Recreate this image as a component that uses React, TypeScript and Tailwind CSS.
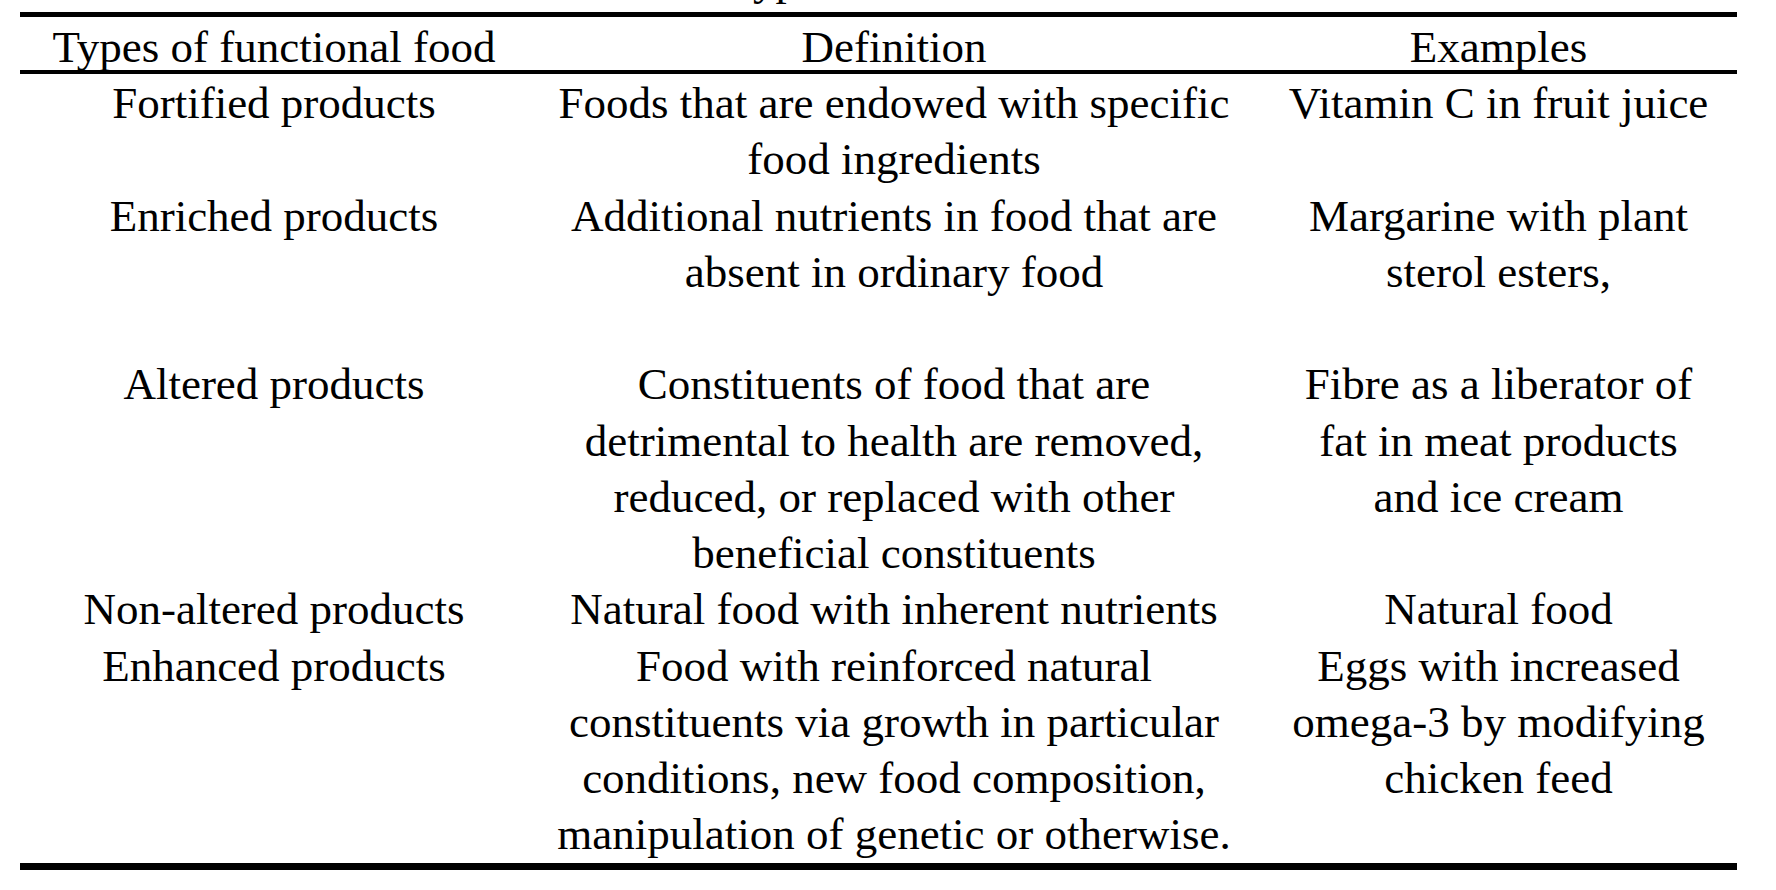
import React from 'react';

interface FoodRow {
  type: string;
  definition: string[];
  examples: string[];
  height?: string;
}

const rows: FoodRow[] = [
  {
    type: 'Fortified products',
    definition: ['Foods that are endowed with specific', 'food ingredients'],
    examples: ['Vitamin C in fruit juice'],
  },
  {
    type: 'Enriched products',
    definition: ['Additional nutrients in food that are', 'absent in ordinary food'],
    examples: ['Margarine with plant', 'sterol esters,'],
    height: 'h-[168.75px]',
  },
  {
    type: 'Altered products',
    definition: [
      'Constituents of food that are',
      'detrimental to health are removed,',
      'reduced, or replaced with other',
      'beneficial constituents',
    ],
    examples: ['Fibre as a liberator of', 'fat in meat products', 'and ice cream'],
  },
  {
    type: 'Non-altered products',
    definition: ['Natural food with inherent nutrients'],
    examples: ['Natural food'],
  },
  {
    type: 'Enhanced products',
    definition: [
      'Food with reinforced natural',
      'constituents via growth in particular',
      'conditions, new food composition,',
      'manipulation of genetic or otherwise.',
    ],
    examples: ['Eggs with increased', 'omega-3 by modifying', 'chicken feed'],
  },
];

const Lines: React.FC<{ lines: string[] }> = ({ lines }) => (
  <div className="text-center whitespace-nowrap">
    {lines.map((line, i) => (
      <div key={i}>{line}</div>
    ))}
  </div>
);

export default function App() {
  return (
    <div className="w-[1776px] h-[890px] overflow-hidden bg-white text-black font-['Liberation_Serif',_'Times_New_Roman',_serif] text-[45px]">
      <div className="pl-[20px] pr-[39px]">
        {/* Caption, mostly above the crop */}
        <div className="-mt-[48px] h-[56px] leading-[56px] text-center whitespace-nowrap">
          Table 1. Types of functional food.
        </div>

        {/* Table */}
        <div className="mt-[4px] border-t-[5px] border-b-[7px] border-black">
          <div className="grid grid-cols-[508px_732px_477px] h-[57px] pt-[4px] leading-[53px] border-b-4 border-black">
            <div className="text-center whitespace-nowrap">Types of functional food</div>
            <div className="text-center whitespace-nowrap">Definition</div>
            <div className="text-center whitespace-nowrap">Examples</div>
          </div>

          <div className="h-[789px] pt-[1px] leading-[56.25px]">
            {rows.map((row) => (
              <div key={row.type} className={`grid grid-cols-[508px_732px_477px] ${row.height ?? ''}`}>
                <Lines lines={[row.type]} />
                <Lines lines={row.definition} />
                <Lines lines={row.examples} />
              </div>
            ))}
          </div>
        </div>
      </div>
    </div>
  );
}
